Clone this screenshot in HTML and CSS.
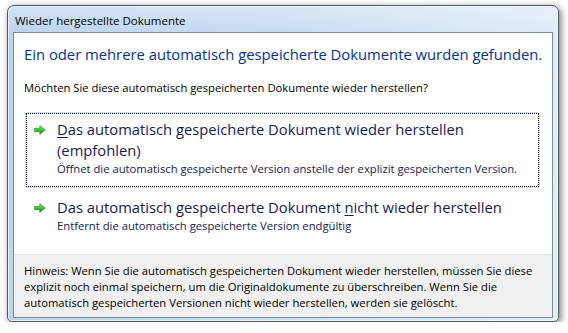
FILE: index.html
```html
<!DOCTYPE html>
<html lang="de">
<head>
<meta charset="utf-8">
<title>Wieder hergestellte Dokumente</title>
<link rel="stylesheet" href="styles.css">
</head>
<body>
<div class="window">
  <div class="titlebar"><span class="title">Wieder hergestellte Dokumente</span></div>
  <div class="client">
    <div class="main">
      <div class="instruction">Ein oder mehrere automatisch gespeicherte Dokumente wurden gefunden.</div>
      <div class="question">Möchten Sie diese automatisch gespeicherten Dokumente wieder herstellen?</div>
      <div class="links">
        <div class="cmd cmd-default">
          <div class="cmd-focus">
            <svg class="arrow" viewBox="0 0 12 10" width="12" height="10" aria-hidden="true">
              <defs>
                <linearGradient id="ga" x1="0" y1="0" x2="0" y2="1">
                  <stop offset="0" stop-color="#8de870"/>
                  <stop offset="0.5" stop-color="#3cc13a"/>
                  <stop offset="1" stop-color="#138a1c"/>
                </linearGradient>
              </defs>
              <path d="M0.5 3.3 H5.8 V0.6 L11.2 5 L5.8 9.4 V6.7 H0.5 Z" fill="url(#ga)" stroke="#1f8f22" stroke-width="0.6" stroke-linejoin="round"/>
            </svg>
            <div class="cmd-text">
              <div class="cmd-title"><u>D</u>as automatisch gespeicherte Dokument wieder herstellen<br>(empfohlen)</div>
              <div class="cmd-desc">Öffnet die automatisch gespeicherte Version anstelle der explizit gespeicherten Version.</div>
            </div>
          </div>
        </div>
        <div class="cmd">
          <div class="cmd-focus">
            <svg class="arrow" viewBox="0 0 12 10" width="12" height="10" aria-hidden="true">
              <defs>
                <linearGradient id="gb" x1="0" y1="0" x2="0" y2="1">
                  <stop offset="0" stop-color="#8de870"/>
                  <stop offset="0.5" stop-color="#3cc13a"/>
                  <stop offset="1" stop-color="#138a1c"/>
                </linearGradient>
              </defs>
              <path d="M0.5 3.3 H5.8 V0.6 L11.2 5 L5.8 9.4 V6.7 H0.5 Z" fill="url(#gb)" stroke="#1f8f22" stroke-width="0.6" stroke-linejoin="round"/>
            </svg>
            <div class="cmd-text">
              <div class="cmd-title">Das automatisch gespeicherte Dokument <u>n</u>icht wieder herstellen</div>
              <div class="cmd-desc">Entfernt die automatisch gespeicherte Version endgültig</div>
            </div>
          </div>
        </div>
      </div>
    </div>
    <div class="footer">Hinweis: Wenn Sie die automatisch gespeicherten Dokument wieder herstellen, müssen Sie diese explizit noch einmal speichern, um die Originaldokumente zu überschreiben. Wenn Sie die automatisch gespeicherten Versionen nicht wieder herstellen, werden sie gelöscht.</div>
  </div>
</div>
</body>
</html>
```

FILE: styles.css
```css
html, body {
  margin: 0;
  padding: 0;
  background: #ffffff;
}

body {
  font-family: "Open Sans", "Noto Sans", sans-serif;
  font-size: 11.25px;
  color: #000;
}

.window {
  margin: 5px 0 0 7px;
  width: 552px;
  height: 317px;
  box-sizing: border-box;
  border: 1px solid #4d5a66;
  border-radius: 7px 7px 5px 5px;
  background:
    linear-gradient(to bottom, rgba(255,255,255,0.35), rgba(255,255,255,0) 30px),
    linear-gradient(100deg, #bad2ed 0%, #c4daf1 45%, #d3e3f5 70%, #e2edf9 100%);
  box-shadow: 2px 2px 7px rgba(0,0,0,0.55), inset 0 0 0 1px rgba(255,255,255,0.65);
  padding: 0 5px 3px 5px;
  display: flex;
  flex-direction: column;
}

.titlebar {
  height: 26px;
  flex: none;
  display: flex;
  align-items: center;
  padding-left: 2px;
}

.title {
  font-size: 11.5px;
  color: #000;
  padding-top: 2px;
}

.client {
  flex: 1;
  border: 1px solid #7d8a98;
  background: #fff;
  display: flex;
  flex-direction: column;
  min-height: 0;
}

.main {
  flex: 1;
  padding: 11px 10px 0 10px;
}

.instruction {
  font-size: 14.8px;
  line-height: 21px;
  color: #003399;
  white-space: nowrap;
}

.question {
  margin-top: 15px;
  font-size: 11.25px;
  line-height: 15px;
}

.links {
  margin-top: 17px;
  display: flex;
  flex-direction: column;
  gap: 2px;
}

.cmd {
  border: 1px solid transparent;
  border-radius: 3px;
  margin-left: 1px;
  margin-right: 2px;
}

.cmd-default {
  border-color: #c5e3f6;
}

.cmd-focus {
  border: 1px dotted transparent;
  display: flex;
  align-items: flex-start;
  padding: 5px 8px 9px 7px;
}

.cmd-default .cmd-focus {
  border-color: #000;
}

.arrow {
  flex: none;
  margin-top: 6px;
  width: 12px;
  height: 10px;
  margin-right: 11px;
}

.cmd-title {
  font-size: 14.75px;
  line-height: 21px;
  color: #151c55;
}

.cmd-desc {
  font-size: 11.25px;
  line-height: 16px;
  color: #151c55;
  white-space: nowrap;
}

u {
  text-decoration-thickness: 1px;
  text-underline-offset: 2px;
}

.footer {
  flex: none;
  height: 63px;
  box-sizing: border-box;
  border-top: 1px solid #dfdfdf;
  background: #f0f0f0;
  padding: 8px 12px 0 10px;
  font-size: 11.25px;
  line-height: 16px;
  color: #000;
}
```
